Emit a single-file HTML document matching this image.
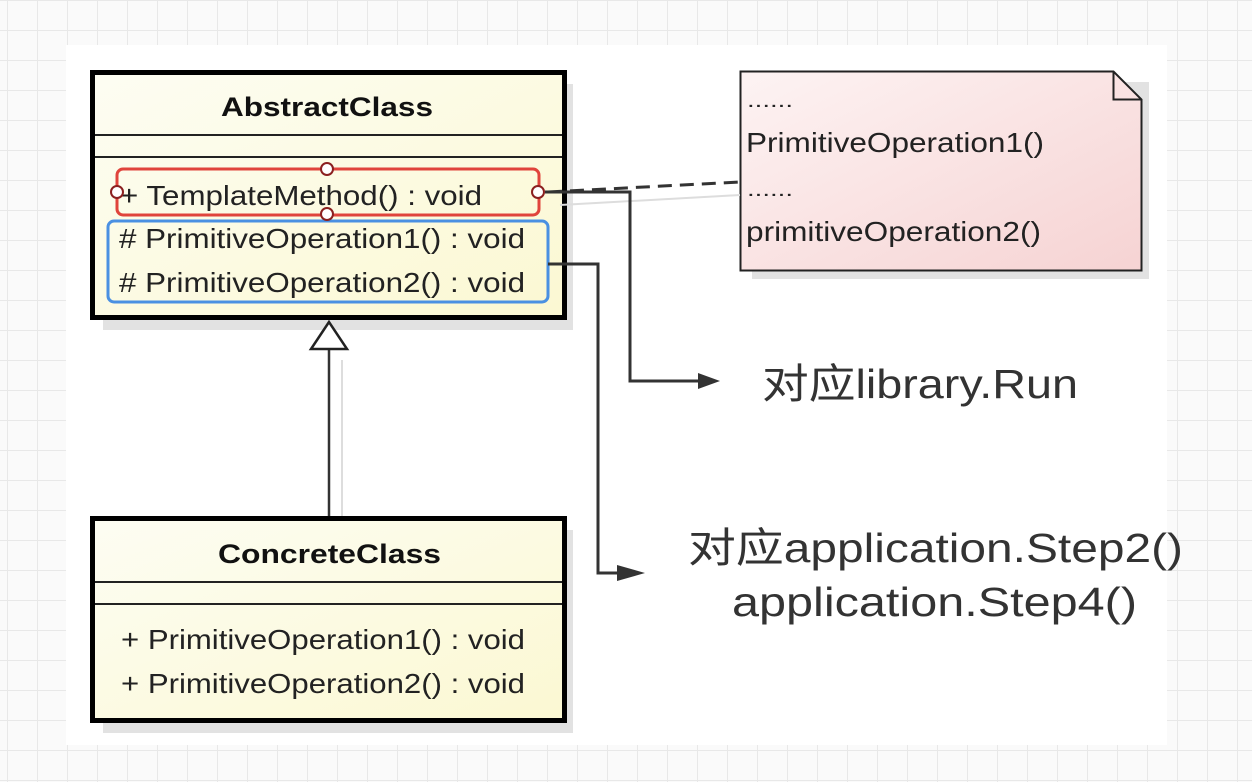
<!DOCTYPE html>
<html><head><meta charset="utf-8"><style>
html,body{margin:0;padding:0;width:1252px;height:782px;overflow:hidden;background:#fff}
svg{display:block}
</style></head><body>
<svg width="1252" height="782" xmlns="http://www.w3.org/2000/svg">
<defs>
<pattern id="g" x="7" y="0" width="30" height="30" patternUnits="userSpaceOnUse">
<path d="M0 0V30M0 0H30" stroke="#e8e8e8" stroke-width="2" fill="none"/>
</pattern>
<linearGradient id="y" x1="0" y1="0" x2="1" y2="1"><stop offset="0" stop-color="#fdfdf3"/><stop offset="1" stop-color="#fbf8d2"/></linearGradient>
<linearGradient id="p" x1="0" y1="0" x2="1" y2="1"><stop offset="0" stop-color="#fdf3f3"/><stop offset="1" stop-color="#f6d3d3"/></linearGradient>
</defs>
<rect width="1252" height="782" fill="#fafafa"/>
<rect width="1252" height="782" fill="url(#g)"/>
<rect x="66" y="45" width="1101" height="700" fill="#fff"/>
<!-- shadows -->
<rect x="103" y="84" width="470" height="246" fill="#e2e2e2"/>
<rect x="103" y="530" width="470" height="203" fill="#e2e2e2"/>
<rect x="752" y="82" width="397" height="197" fill="#e2e2e2"/>
<!-- abstract class -->
<rect x="92.5" y="72.5" width="472" height="245" fill="url(#y)" stroke="#000" stroke-width="5"/>
<line x1="95" y1="135" x2="562" y2="135" stroke="#222" stroke-width="2"/>
<line x1="95" y1="157" x2="562" y2="157" stroke="#222" stroke-width="2"/>
<text x="221" y="116" font-family="Liberation Sans, sans-serif" font-weight="bold" font-size="27" fill="#111" textLength="212" lengthAdjust="spacingAndGlyphs">AbstractClass</text>
<rect x="117" y="169" width="422" height="46" rx="6" fill="none" stroke="#e0443c" stroke-width="3"/>
<rect x="108" y="221" width="440" height="81" rx="6" fill="none" stroke="#4a90e2" stroke-width="3"/>
<g font-family="Liberation Sans, sans-serif" font-size="28" fill="#222">
<text x="120" y="205" textLength="362" lengthAdjust="spacingAndGlyphs">+ TemplateMethod() : void</text>
<text x="119" y="248" textLength="406" lengthAdjust="spacingAndGlyphs"># PrimitiveOperation1() : void</text>
<text x="119" y="292" textLength="406" lengthAdjust="spacingAndGlyphs"># PrimitiveOperation2() : void</text>
</g>
<g fill="#fff" stroke="#8b2020" stroke-width="2">
<circle cx="327" cy="169" r="6"/><circle cx="327" cy="214" r="6"/>
<circle cx="117" cy="192" r="6"/><circle cx="538" cy="192" r="6"/>
</g>
<!-- concrete class -->
<rect x="92.5" y="518.5" width="472" height="202" fill="url(#y)" stroke="#000" stroke-width="5"/>
<line x1="95" y1="582" x2="562" y2="582" stroke="#222" stroke-width="2"/>
<line x1="95" y1="604" x2="562" y2="604" stroke="#222" stroke-width="2"/>
<text x="218" y="563" font-family="Liberation Sans, sans-serif" font-weight="bold" font-size="27" fill="#111" textLength="223" lengthAdjust="spacingAndGlyphs">ConcreteClass</text>
<g font-family="Liberation Sans, sans-serif" font-size="28" fill="#222">
<text x="121" y="649" textLength="404" lengthAdjust="spacingAndGlyphs">+ PrimitiveOperation1() : void</text>
<text x="121" y="693" textLength="404" lengthAdjust="spacingAndGlyphs">+ PrimitiveOperation2() : void</text>
</g>
<!-- inheritance -->
<line x1="342" y1="360" x2="342" y2="516" stroke="#ddd" stroke-width="2"/>
<line x1="329" y1="349" x2="329" y2="516" stroke="#333" stroke-width="2.5"/>
<polygon points="329,322 311,349 347,349" fill="#fff" stroke="#222" stroke-width="2.5"/>
<!-- note -->
<path d="M740.5 71.5H1113.5L1141.5 99.5V270.5H740.5Z" fill="url(#p)" stroke="#222" stroke-width="2"/>
<path d="M1113.5 71.5V99.5H1141.5" fill="none" stroke="#222" stroke-width="2"/>
<g font-family="Liberation Sans, sans-serif" font-size="28" fill="#222">
<text x="747" y="107" font-size="20" textLength="46" lengthAdjust="spacingAndGlyphs">......</text>
<text x="746" y="152" textLength="298" lengthAdjust="spacingAndGlyphs">PrimitiveOperation1()</text>
<text x="747" y="196" font-size="20" textLength="46" lengthAdjust="spacingAndGlyphs">......</text>
<text x="746" y="241" textLength="295" lengthAdjust="spacingAndGlyphs">primitiveOperation2()</text>
</g>
<line x1="560" y1="205" x2="740" y2="195" stroke="#ddd" stroke-width="2"/>
<line x1="548" y1="192" x2="740" y2="182" stroke="#333" stroke-width="3" stroke-dasharray="14,8"/>
<!-- connectors -->
<path d="M545 192H630V381H700" fill="none" stroke="#333" stroke-width="3"/>
<polygon points="698,373 720,381 698,389" fill="#333"/>
<path d="M548 264H598V573H622" fill="none" stroke="#333" stroke-width="3"/>
<polygon points="617,565 645,573 617,581" fill="#333"/>
<g font-family="Liberation Sans, 'Noto Sans CJK SC', sans-serif" font-size="41" fill="#333">
<text x="762" y="398" textLength="316" lengthAdjust="spacingAndGlyphs">对应library.Run</text>
<text x="688" y="562" textLength="495" lengthAdjust="spacingAndGlyphs">对应application.Step2()</text>
<text x="732" y="616" textLength="405" lengthAdjust="spacingAndGlyphs">application.Step4()</text>
</g>
</svg>
</body></html>
